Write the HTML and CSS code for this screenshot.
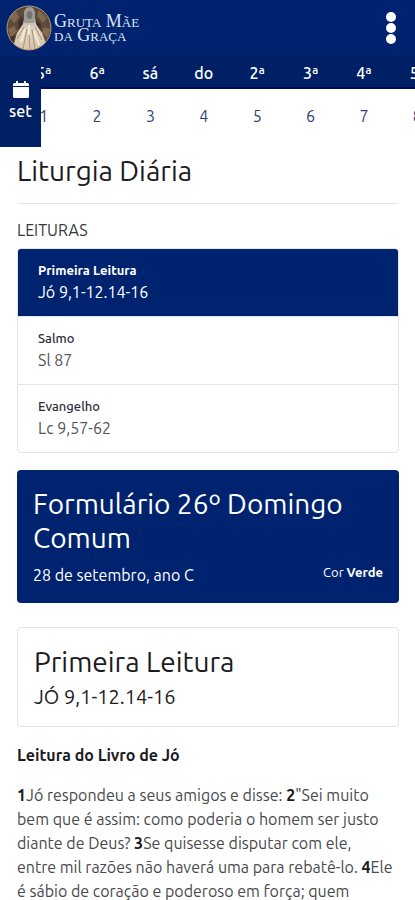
FILE: index.html
```html
<!DOCTYPE html>
<html lang="pt-BR">
<head>
<meta charset="utf-8">
<meta name="viewport" content="width=device-width, initial-scale=1">
<title>Liturgia Diária</title>
<link rel="stylesheet" href="styles.css">
</head>
<body>
<header class="topbar">
  <a class="brand" href="#">
    <svg class="brand-logo" viewBox="0 0 46 46" aria-hidden="true">
      <defs>
        <clipPath id="disc"><circle cx="23" cy="23" r="22"/></clipPath>
        <linearGradient id="robe" x1="0" y1="0" x2="0" y2="1">
          <stop offset="0" stop-color="#a69c8c"/>
          <stop offset=".5" stop-color="#ddd2c0"/>
          <stop offset="1" stop-color="#d8c4a8"/>
        </linearGradient>
        <filter id="soft"><feGaussianBlur stdDeviation=".6"/></filter>
      </defs>
      <g clip-path="url(#disc)">
        <rect width="46" height="46" fill="#5c4b3a"/>
        <g filter="url(#soft)">
          <path d="M3 12 10 6l3 6-5 6zM33 5l8 8-4 5-6-7zM2 24l6-3 3 5-6 7zM38 22l6 2-2 9-6-5z" fill="#83694f"/>
          <path d="M12 17l4-6 2 7-5 7zM31 15l4 5-1 7-4-6zM2 33l7-3-2 8z" fill="#3d332a"/>
          <path d="M18 14Q17 3 23 3t6 11l1 5 6 9 7 18H6l5-18 6-9z" fill="url(#robe)"/>
          <path d="M18 10Q18 2 23.500 2T29 10l-1 8H18z" fill="#9c9d98"/>
          <ellipse cx="23.500" cy="10" rx="3" ry="4" fill="#77776f"/>
          <path d="M18 22l-7 12M29 22l7 13M21 24l-4 20M26 24l3 20M23 29l1 16" fill="none" stroke="#a8937a"/>
          <path d="M19 24l-4 13M28 26l5 14M23 20v10" fill="none" stroke="#f2eada" stroke-width="2"/>
        </g>
      </g>
      <circle cx="23" cy="23" r="22" fill="none" stroke="#b69976"/>
    </svg>
    <span class="brand-name">Gruta Mãe<br>da Graça</span>
  </a>
  <button class="menu" type="button" aria-label="Menu">
    <svg viewBox="0 0 12 34" aria-hidden="true"><circle cx="6" cy="6" r="5"/><circle cx="6" cy="17" r="5"/><circle cx="6" cy="28" r="5"/></svg>
  </button>
</header>

<nav class="calendar" aria-label="Calendário">
  <div class="days">
    <a class="day" href="#"><b>5ª</b><span>1</span></a>
    <a class="day" href="#"><b>6ª</b><span>2</span></a>
    <a class="day" href="#"><b>sá</b><span>3</span></a>
    <a class="day" href="#"><b>do</b><span>4</span></a>
    <a class="day" href="#"><b>2ª</b><span>5</span></a>
    <a class="day" href="#"><b>3ª</b><span>6</span></a>
    <a class="day" href="#"><b>4ª</b><span>7</span></a>
    <a class="day" href="#"><b>5ª</b><span>8</span></a>
  </div>
  <button class="month" type="button">
    <svg viewBox="0 0 16 18" aria-hidden="true"><path d="M3.500 0h1Q5 0 5 .5V2h6V.5Q11 0 11.500 0h1Q13 0 13 .5V2h1.500Q16 2 16 3.500V5H0V3.500Q0 2 1.500 2H3V.5Q3 0 3.500 0zM0 6h16v9.500q0 1.500-1.500 1.500h-13Q0 17 0 15.500z"/></svg>
    set
  </button>
</nav>

<main class="content">
  <h1 class="title">Liturgia Diária</h1>

  <h2 class="label">LEITURAS</h2>
  <div class="readings">
    <a class="reading active" href="#"><b>Primeira Leitura</b><span>Jó 9,1-12.14-16</span></a>
    <a class="reading" href="#"><b>Salmo</b><span>Sl 87</span></a>
    <a class="reading" href="#"><b>Evangelho</b><span>Lc 9,57-62</span></a>
  </div>

  <section class="card form-card">
    <h2>Formulário 26º Domingo Comum</h2>
    <div class="form-meta">
      <span>28 de setembro, ano C</span>
      <small>Cor <b>Verde</b></small>
    </div>
  </section>

  <section class="card reading-card">
    <h2>Primeira Leitura</h2>
    <p>JÓ 9,1-12.14-16</p>
  </section>

  <article class="scripture">
    <h3>Leitura do Livro de Jó</h3>
    <p><b>1</b>Jó respondeu a seus amigos e disse: <b>2</b>"Sei muito bem que é assim: como poderia o homem ser justo diante de Deus? <b>3</b>Se quisesse disputar com ele, entre mil razões não haverá uma para rebatê-lo. <b>4</b>Ele é sábio de coração e poderoso em força; quem</p>
  </article>
</main>
</body>
</html>
```
FILE: styles.css
```css
* { box-sizing: border-box; }

:root {
  --navy: #002370;
  --navy-dark: #002066;
  --navy-line: #00085a;
  --line: #e4e4e6;
}

body {
  margin: 0;
  overflow-x: hidden;
  background: #fff;
  color: #1c1c1e;
  font-family: Ubuntu, "Noto Sans", sans-serif;
  font-size: 16px;
  line-height: 24px;
}

h1, h2, h3, p { margin: 0; font-weight: 400; }
a { color: inherit; text-decoration: none; }
button { border: 0; padding: 0; color: #fff; font: inherit; cursor: pointer; }

.topbar {
  display: flex;
  align-items: center;
  justify-content: space-between;
  height: 56px;
  padding: 0 18px 0 6px;
  background: var(--navy);
  color: #fff;
}
.brand { display: flex; align-items: center; gap: 2px; }
.brand-logo { width: 46px; height: 46px; }
.brand-name {
  color: #dfe5f3;
  font-family: "Liberation Serif", serif;
  font-size: 18px;
  font-variant: small-caps;
  line-height: 14px;
}
.menu { display: flex; background: none; }
.menu svg { width: 12px; height: 34px; fill: #fff; }

.calendar { position: relative; height: 91px; overflow: hidden; }
.days {
  display: grid;
  grid-template-columns: repeat(8, calc((100% + 29px) / 8));
  padding-left: 17px;
  background: linear-gradient(var(--navy-dark) 0 31px, var(--navy-line) 31px 33px, #fff 33px);
}
.day { display: flex; flex-direction: column; text-align: center; }
.day b { height: 33px; padding-top: 5px; color: #fff; font-weight: 500; }
.day span { height: 58px; padding-top: 15px; color: #33407c; }
.month {
  position: absolute;
  top: 0;
  left: 0;
  display: flex;
  flex-direction: column;
  align-items: center;
  width: 41px;
  height: 91px;
  padding-top: 25px;
  background: var(--navy-dark);
  font-weight: 500;
}
.month svg { width: 16px; height: 18px; fill: #fff; }

.content { padding: 0 16px 0 17px; }
.title {
  padding: 8px 0 16px;
  border-bottom: 1px solid var(--line);
  font-size: 28px;
  line-height: 32px;
}
.label { padding: 14px 0 6px; color: #38383c; font-size: 16px; line-height: 24px; }

.readings { border: 1px solid var(--line); border-radius: 4px; overflow: hidden; }
.reading {
  display: flex;
  flex-direction: column;
  padding: 10px 20px 13px;
  color: #55555a;
  line-height: 22px;
}
.reading + .reading { border-top: 1px solid var(--line); }
.reading b { color: #2c2f38; font-size: 13px; font-weight: 500; }
.reading.active { margin: -1px -1px 0; padding: 11px 21px 13px; background: var(--navy); color: #fff; }
.reading.active b { color: #fff; font-weight: 700; }

.card { padding: 17px 16px 16px; border-radius: 4px; }
.card h2 { font-size: 28px; line-height: 34px; }
.form-card { margin-top: 17px; background: var(--navy); color: #fff; }
.form-meta { display: flex; justify-content: space-between; padding-top: 8px; }
.form-meta small { font-size: 13px; line-height: 18px; }

.reading-card { margin-top: 24px; padding-bottom: 15px; border: 1px solid var(--line); }
.reading-card p { padding-top: 4px; font-size: 20px; line-height: 28px; }

.scripture { padding-right: 6px; }
.scripture h3 { padding: 16px 0; font-size: 16px; font-weight: 700; }
.scripture p { color: #4a4a4e; }
.scripture b { color: #1c1c1e; }
```
